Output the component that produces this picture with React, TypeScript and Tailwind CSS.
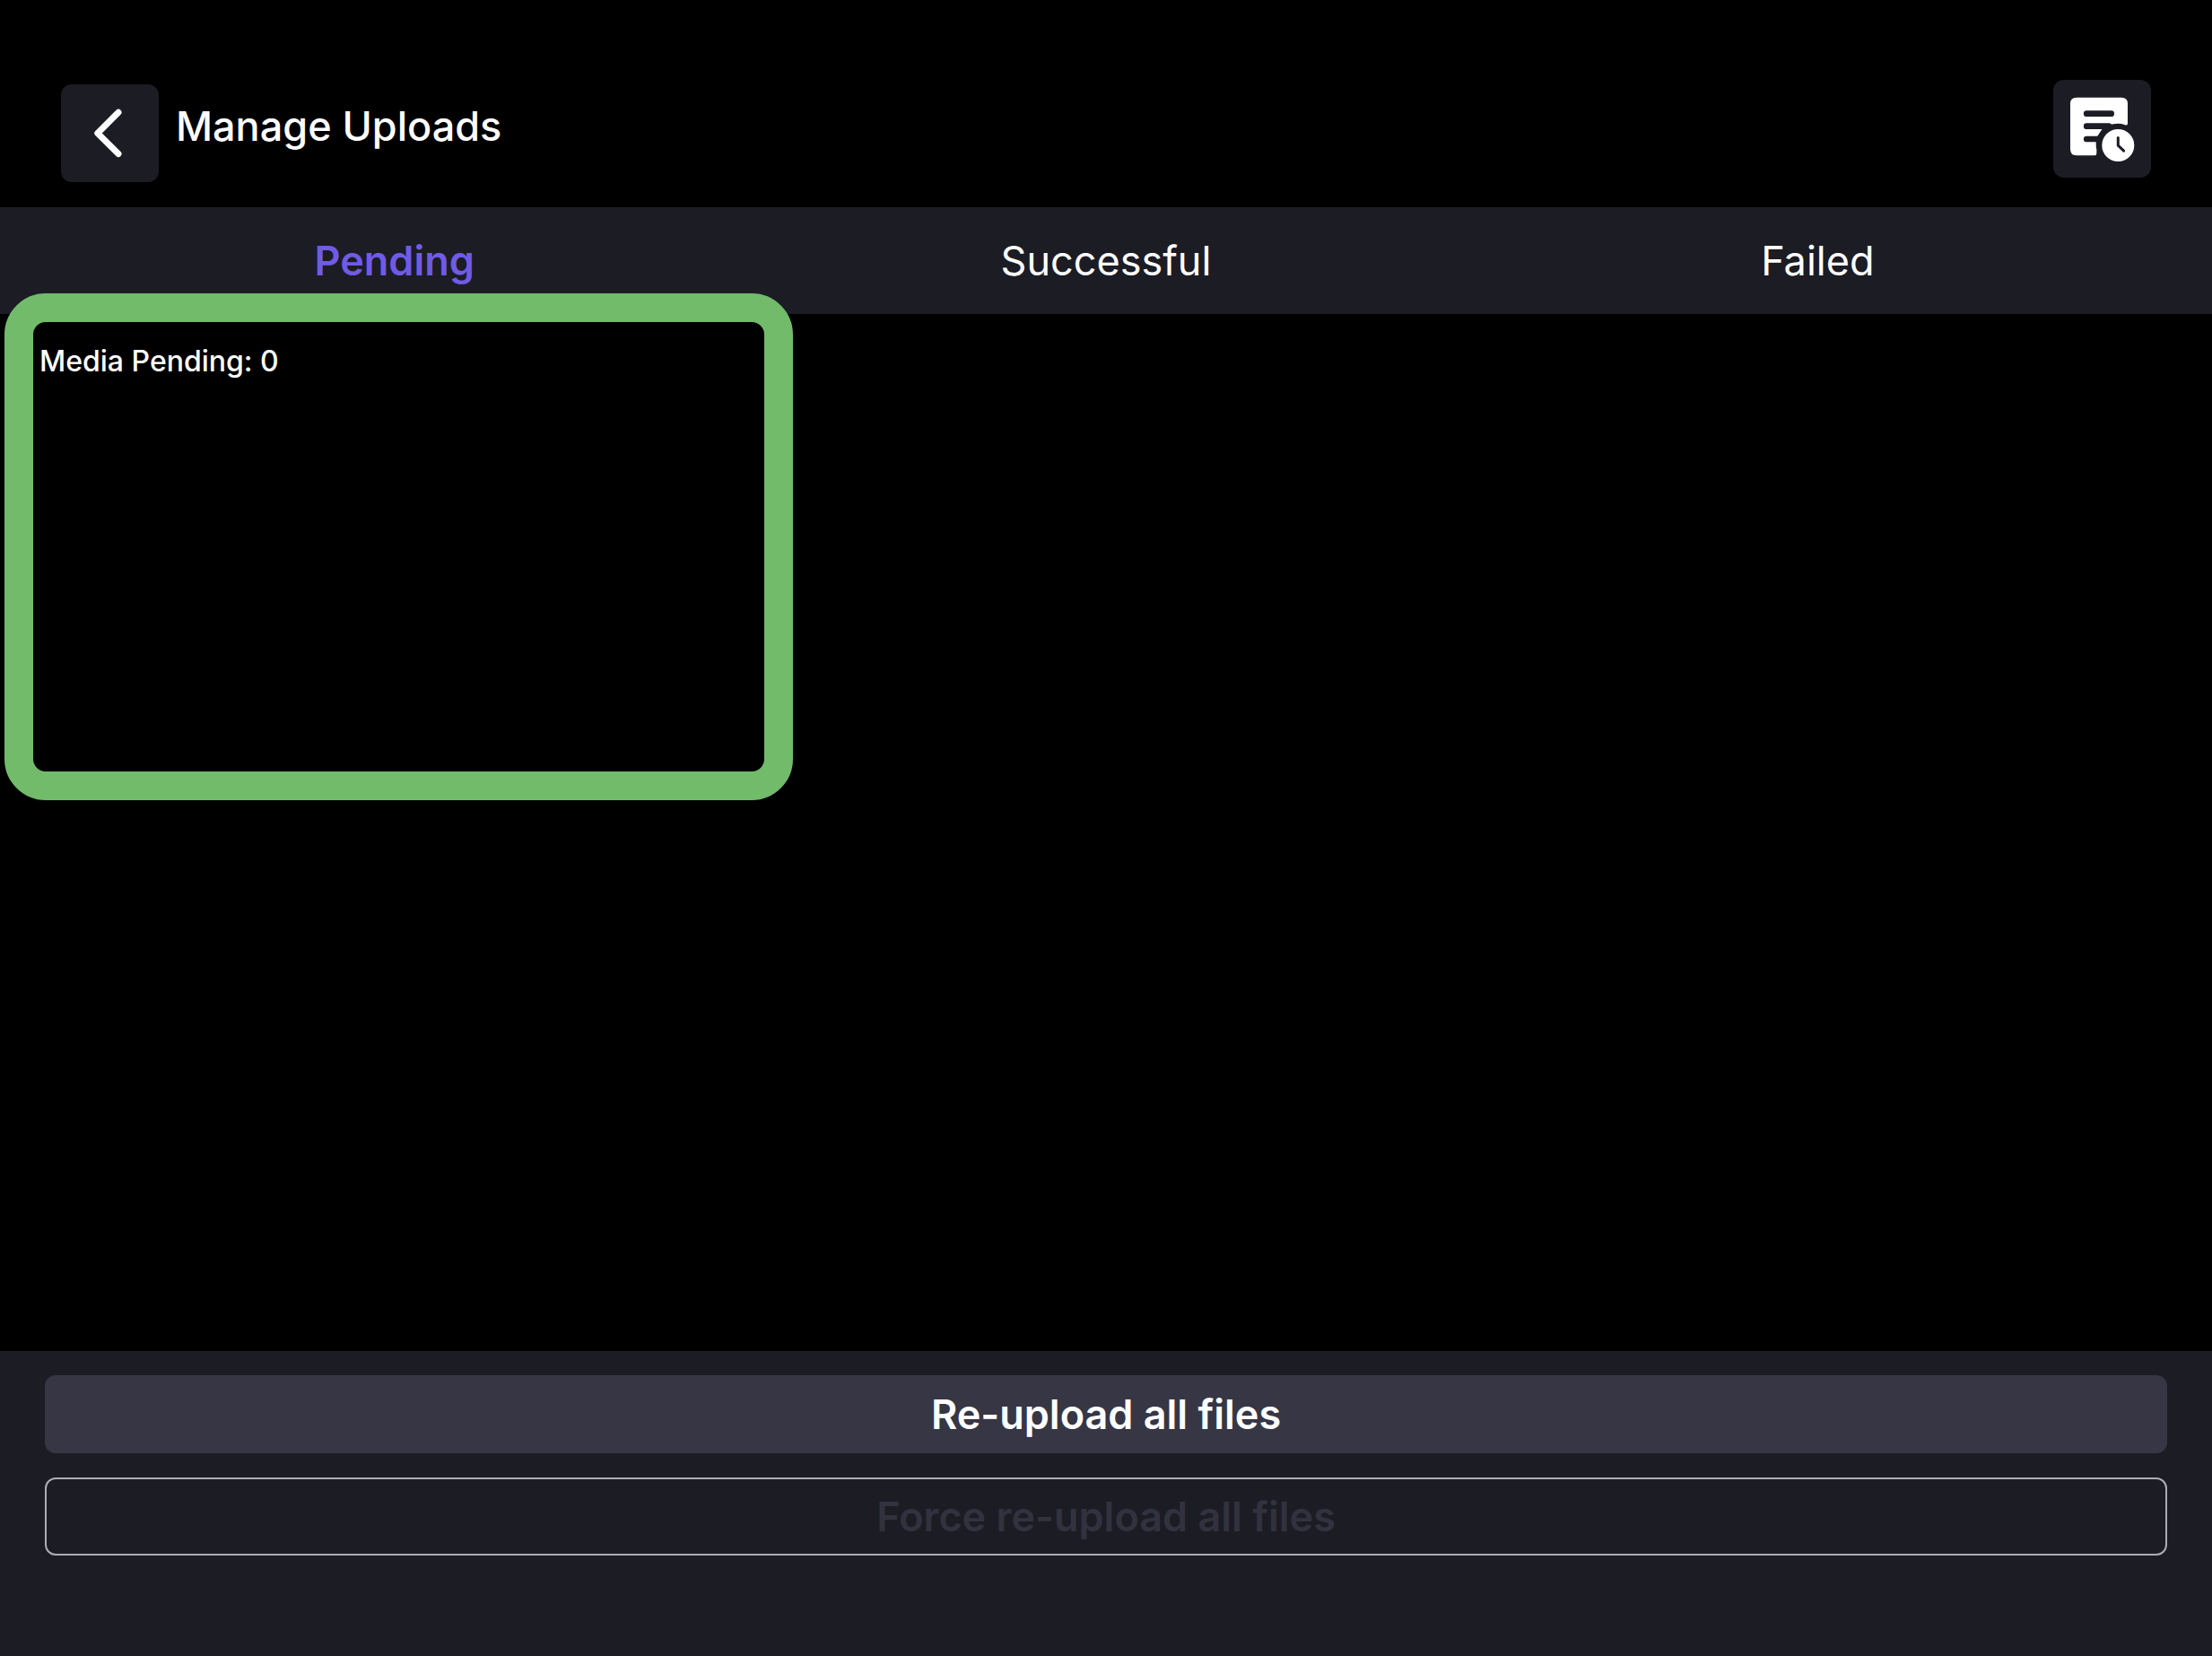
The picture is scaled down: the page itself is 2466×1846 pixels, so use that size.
// ============================================================
// Manage Uploads - pending, successful and failed media uploads
// ============================================================

import { useState } from 'react';
import clsx from 'clsx';

type TabKey = 'pending' | 'successful' | 'failed';

interface UploadTab {
    key: TabKey;
    label: string;
    count: number;
}

const TABS: UploadTab[] = [
    { key: 'pending', label: 'Pending', count: 0 },
    { key: 'successful', label: 'Successful', count: 0 },
    { key: 'failed', label: 'Failed', count: 0 },
];

function BackIcon() {
    return (
        <svg
            viewBox="0 0 109 109"
            className="size-full"
            fill="none"
            stroke="currentColor"
            strokeWidth="7"
            strokeLinecap="round"
            strokeLinejoin="round"
            aria-hidden="true"
        >
            <path d="M64 31.2 L40.8 54.5 L64 77.6" />
        </svg>
    );
}

// Document with a small clock cut into its lower right corner
function UploadLogIcon() {
    return (
        <svg viewBox="0 0 109 109" className="size-full" fill="none" aria-hidden="true">
            <path
                d="M26 19.7 H76 Q83 19.7 83 26.7 V48.5 Q83 51.5 79.5 50 Q76 48.8 72.3 48.8 Q61 48.8 54.3 55.3 L48.8 63.5 Q47.2 68 47.8 75 Q48.8 78 48.3 82 Q48.3 84.3 46.5 84.3 H26 Q19 84.3 19 77.3 V26.7 Q19 19.7 26 19.7 Z"
                fill="white"
            />
            <path
                d="M37.2 37.7 H64.7 M37.2 51.7 H62 M37.2 66 H50"
                stroke="#1c1c24"
                strokeWidth="6.7"
                strokeLinecap="round"
            />
            <circle cx="72.3" cy="73" r="18" fill="white" />
            <path
                d="M72.3 64.4 V73.2 L78.6 79.2"
                stroke="#1c1c24"
                strokeWidth="3"
                strokeLinecap="round"
                strokeLinejoin="round"
            />
        </svg>
    );
}

export default function App() {
    const [activeKey, setActiveKey] = useState<TabKey>('pending');
    const activeTab = TABS.find((tab) => tab.key === activeKey) ?? TABS[0];

    return (
        <div className="flex min-h-screen flex-col bg-black font-['Inter',sans-serif] text-white">
            <header className="flex items-start justify-between px-[68px] pt-[89px] pb-7">
                <div className="flex items-start gap-[19px]">
                    <button
                        type="button"
                        aria-label="Back"
                        className="mt-[5px] size-[109px] rounded-xl bg-[#1c1c24]"
                    >
                        <BackIcon />
                    </button>
                    <h1 className="text-[45px] leading-[104px] font-medium">Manage Uploads</h1>
                </div>
                <button
                    type="button"
                    aria-label="Upload log"
                    className="size-[109px] rounded-xl bg-[#1c1c24]"
                >
                    <UploadLogIcon />
                </button>
            </header>

            <nav role="tablist" className="grid grid-cols-3 bg-[#1c1c24] px-[43px]">
                {TABS.map((tab) => (
                    <button
                        key={tab.key}
                        type="button"
                        role="tab"
                        aria-selected={tab.key === activeKey}
                        onClick={() => setActiveKey(tab.key)}
                        className={clsx(
                            'text-[45px] leading-[119px]',
                            tab.key === activeKey ? 'font-semibold text-[#6f5be5]' : 'font-normal'
                        )}
                    >
                        {tab.label}
                    </button>
                ))}
            </nav>

            <main className="relative grow px-[44px] pt-7">
                {/* Highlight frame around the list, overlaps the tab bar */}
                <div className="pointer-events-none absolute -top-[23px] left-[5px] h-[565px] w-[879px] rounded-[46px] border-[32px] border-[#71bb6b]" />
                <p className="text-[32px] leading-[50px] font-medium">
                    Media {activeTab.label}: {activeTab.count}
                </p>
            </main>

            <footer className="flex flex-col gap-[27px] bg-[#1c1c24] px-[50px] pt-[27px] pb-28">
                <button
                    type="button"
                    className="h-[87px] rounded-xl bg-[#363645] text-[45px] font-semibold"
                >
                    Re-upload all files
                </button>
                <button
                    type="button"
                    disabled
                    className="h-[87px] rounded-xl border-2 border-[#adadb2] text-[45px] font-semibold text-[#32323f]"
                >
                    Force re-upload all files
                </button>
            </footer>
        </div>
    );
}
